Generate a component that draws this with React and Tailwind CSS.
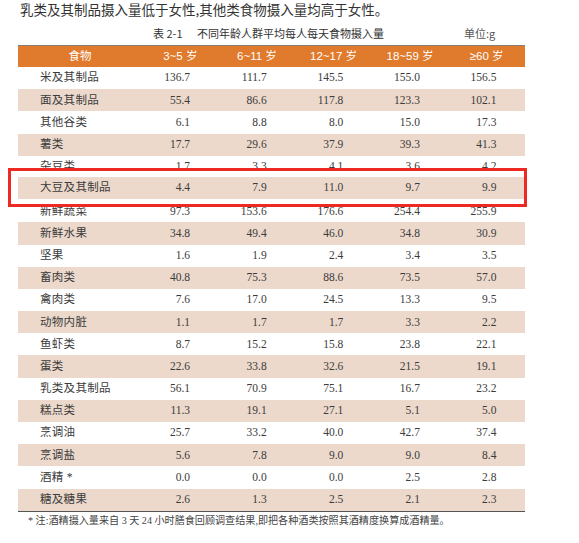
const heads = ["3~5 岁", "6~11 岁", "12~17 岁", "18~59 岁", "≥60 岁"];

const rows = [
  ["米及其制品", "136.7", "111.7", "145.5", "155.0", "156.5"],
  ["面及其制品", "55.4", "86.6", "117.8", "123.3", "102.1"],
  ["其他谷类", "6.1", "8.8", "8.0", "15.0", "17.3"],
  ["薯类", "17.7", "29.6", "37.9", "39.3", "41.3"],
  ["杂豆类", "1.7", "3.3", "4.1", "3.6", "4.2"],
  ["大豆及其制品", "4.4", "7.9", "11.0", "9.7", "9.9"],
  ["新鲜蔬菜", "97.3", "153.6", "176.6", "254.4", "255.9"],
  ["新鲜水果", "34.8", "49.4", "46.0", "34.8", "30.9"],
  ["坚果", "1.6", "1.9", "2.4", "3.4", "3.5"],
  ["畜肉类", "40.8", "75.3", "88.6", "73.5", "57.0"],
  ["禽肉类", "7.6", "17.0", "24.5", "13.3", "9.5"],
  ["动物内脏", "1.1", "1.7", "1.7", "3.3", "2.2"],
  ["鱼虾类", "8.7", "15.2", "15.8", "23.8", "22.1"],
  ["蛋类", "22.6", "33.8", "32.6", "21.5", "19.1"],
  ["乳类及其制品", "56.1", "70.9", "75.1", "16.7", "23.2"],
  ["糕点类", "11.3", "19.1", "27.1", "5.1", "5.0"],
  ["烹调油", "25.7", "33.2", "40.0", "42.7", "37.4"],
  ["烹调盐", "5.6", "7.8", "9.0", "9.0", "8.4"],
  ["酒精 *", "0.0", "0.0", "0.0", "2.5", "2.8"],
  ["糖及糖果", "2.6", "1.3", "2.5", "2.1", "2.3"],
];

function Row({ r, shaded }) {
  return (
    <div
      className={
        "grid grid-cols-[124px_repeat(5,76.6px)] h-[22.2px] items-center text-[#3b3b3b] " +
        (shaded ? "bg-[#ecd9cc]" : "bg-white")
      }
    >
      <div className="pl-[22px] text-[11.5px] tracking-[0.3px]">{r[0]}</div>
      {r.slice(1).map((v, i) => (
        <div key={i} className="text-right pr-[28.5px] text-[11.5px]">
          {v}
        </div>
      ))}
    </div>
  );
}

export default function App() {
  return (
    <div className="relative w-[579px] h-[543px] bg-white overflow-hidden font-['Liberation_Serif','Noto_Sans_CJK_SC',serif]">
      <p className="pl-[20px] pt-[1px] text-[13.5px] leading-[16px] text-[#333] font-['Noto_Sans_CJK_SC',sans-serif]">
        乳类及其制品摄入量低于女性,其他类食物摄入量均高于女性。
      </p>

      <div className="ml-[18px] w-[507px] mt-[7px]">
        <div className="flex items-center h-[18px] text-[11px] text-[#333] font-['Noto_Sans_CJK_SC',sans-serif]">
          <span className="ml-[135px] w-[44px]">表 2-1</span>
          <span>不同年龄人群平均每人每天食物摄入量</span>
          <span className="ml-[80px] text-[#555]">单位:g</span>
        </div>

        <div className="mt-[3px] grid grid-cols-[124px_repeat(5,76.6px)] h-[22px] items-center bg-[#e07a2c] border-t border-[#8a7c72] text-white text-[11.5px] font-['Liberation_Sans','Noto_Sans_CJK_SC',sans-serif]">
          <div className="text-center">食物</div>
          {heads.map((h) => (
            <div key={h} className="text-center">
              {h}
            </div>
          ))}
        </div>

        <div className="border-b border-[#555]">
          {rows.map((r, i) => (
            <Row key={r[0]} r={r} shaded={i % 2 === 1} />
          ))}
        </div>

        <p className="mt-[2px] ml-[10px] text-[10.1px] leading-[14px] text-[#444]">
          * 注:酒精摄入量来自 3 天 24 小时膳食回顾调查结果,即把各种酒类按照其酒精度换算成酒精量。
        </p>
      </div>

      <div className="absolute left-[8px] top-[168px] w-[519px] h-[39px] border-[3px] border-[#ec2a22] bg-white overflow-hidden">
        <div className="ml-[7px] mt-[6px] w-[507px]">
          <Row r={rows[5]} shaded />
        </div>
      </div>
    </div>
  );
}
